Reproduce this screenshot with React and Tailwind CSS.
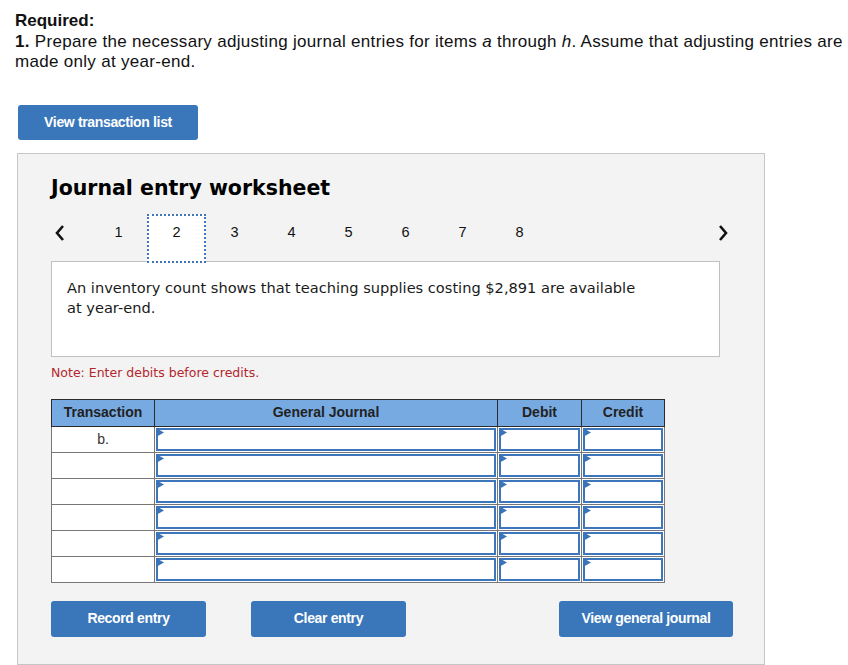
import React from "react";

const sans = { fontFamily: '"Liberation Sans", Arial, sans-serif' };
const verdana = { fontFamily: '"DejaVu Sans", Verdana, sans-serif' };

const Marker = () => (
  <svg className="absolute -left-[2px] -top-[2px]" width="8" height="9" viewBox="0 0 8 9">
    <polygon points="0,0 8,4.5 0,9" fill="#3a73b8" />
  </svg>
);

const InputCell = ({ className }) => (
  <div className={`p-[1px] flex ${className}`}>
    <div className="relative flex-1 border-2 border-[#3d76bb] bg-white">
      <Marker />
    </div>
  </div>
);

const Chevron = ({ dir }) => (
  <svg width="12" height="18" viewBox="0 0 12 18">
    <polyline
      points={dir === "left" ? "9,2 3,9 9,16" : "3,2 9,9 3,16"}
      fill="none"
      stroke="#111"
      strokeWidth="2.6"
    />
  </svg>
);

export default function App() {
  const pages = [1, 2, 3, 4, 5, 6, 7, 8];
  const rows = ["b.", "", "", "", "", ""];

  return (
    <div className="w-[848px] h-[665px] bg-white overflow-hidden text-[#111]" style={sans}>
      {/* Required */}
      <div className="pl-[15px] pt-[11px] text-[17px] leading-[20.5px] tracking-[0.3px]">
        <div className="font-bold tracking-normal">Required:</div>
        <div>
          <span className="font-bold">1.</span> Prepare the necessary adjusting journal entries for items <i>a</i> through <i>h</i>. Assume that adjusting entries are
          <br />
          made only at year-end.
        </div>
      </div>

      <button className="ml-[18px] mt-[32px] h-[35px] w-[180px] rounded-[3px] bg-[#3a76ba] text-white text-[14px] font-bold tracking-tight">
        View transaction list
      </button>

      {/* Worksheet panel */}
      <div className="ml-[17px] mt-[13px] w-[748px] h-[512px] border border-[#c6c6c6] bg-[#f3f3f3] pl-[33px] pt-[22px]">
        <div className="text-[20.5px] leading-[24px] font-bold text-black" style={verdana}>
          Journal entry worksheet
        </div>

        {/* Pagination */}
        <div className="relative z-10 mt-[14px] flex h-[49px] w-[685px] items-center pb-[10px] text-[14.5px]">
          <div className="flex w-[39px] items-center pl-[3px]">
            <Chevron dir="left" />
          </div>
          {pages.map((p) =>
            p === 2 ? (
              <div
                key={p}
                className="-mb-[10px] flex h-[49px] w-[59px] items-center justify-center border-2 border-dotted border-[#3d76bb] bg-white pb-[10px]"
              >
                {p}
              </div>
            ) : (
              <div key={p} className="flex w-[57px] items-center justify-center">
                {p}
              </div>
            )
          )}
          <div className="ml-auto flex w-[26px] items-center justify-center">
            <Chevron dir="right" />
          </div>
        </div>

        {/* Description */}
        <div
          className="-mt-[2px] h-[96px] w-[669px] border border-[#c0c0c0] bg-white pl-[15px] pt-[16px] text-[14.6px] leading-[20px] text-[#1a1a1a]"
          style={verdana}
        >
          An inventory count shows that teaching supplies costing $2,891 are available
          <br />
          at year-end.
        </div>

        <div className="mt-[8px] text-[12.5px] leading-[16px] text-[#b3262c]" style={verdana}>
          Note: Enter debits before credits.
        </div>

        {/* Journal table */}
        <div className="mt-[18px] w-[614px]">
          <div className="flex h-[28px] border border-[#2b2b2b] bg-[#78aae2] text-[14px] font-bold text-[#222]">
            <div className="flex w-[103px] items-center justify-center border-r border-[#2b2b2b]">Transaction</div>
            <div className="flex w-[343px] items-center justify-center border-r border-[#2b2b2b]">General Journal</div>
            <div className="flex w-[84px] items-center justify-center border-r border-[#2b2b2b]">Debit</div>
            <div className="flex flex-1 items-center justify-center">Credit</div>
          </div>
          {rows.map((t, i) => (
            <div key={i} className="flex h-[26px] border-x border-b border-[#777] bg-white">
              <div className="flex w-[103px] items-center justify-center border-r border-[#777] text-[14px] text-[#333]">
                {t}
              </div>
              <InputCell className="w-[343px] border-r border-[#777]" />
              <InputCell className="w-[84px] border-r border-[#777]" />
              <InputCell className="flex-1" />
            </div>
          ))}
        </div>

        {/* Buttons */}
        <div className="mt-[18px] flex text-[14px] font-bold tracking-tight text-white">
          <button className="h-[36px] w-[155px] rounded-[3px] bg-[#3a76ba]">Record entry</button>
          <button className="ml-[45px] h-[36px] w-[155px] rounded-[3px] bg-[#3a76ba]">Clear entry</button>
          <button className="ml-[153px] h-[36px] w-[174px] rounded-[3px] bg-[#3a76ba]">View general journal</button>
        </div>
      </div>
    </div>
  );
}
